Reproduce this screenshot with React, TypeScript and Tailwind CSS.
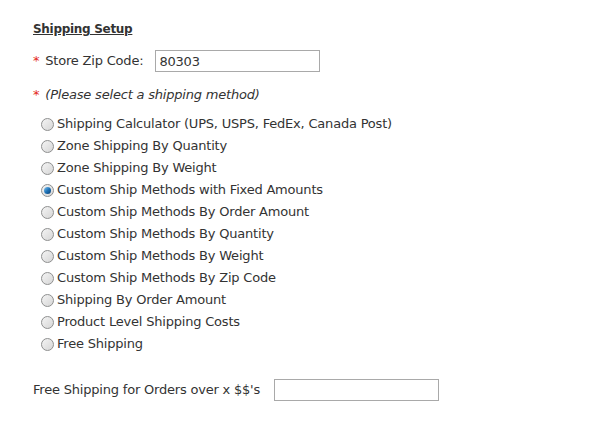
import { useState } from 'react'

const methods = [
  'Shipping Calculator (UPS, USPS, FedEx, Canada Post)',
  'Zone Shipping By Quantity',
  'Zone Shipping By Weight',
  'Custom Ship Methods with Fixed Amounts',
  'Custom Ship Methods By Order Amount',
  'Custom Ship Methods By Quantity',
  'Custom Ship Methods By Weight',
  'Custom Ship Methods By Zip Code',
  'Shipping By Order Amount',
  'Product Level Shipping Costs',
  'Free Shipping',
]

function Radio({ checked }: { checked: boolean }) {
  return (
    <span className="w-[13px] h-[13px] rounded-full border border-[#8e8f8f] bg-gradient-to-br from-[#f4f4f4] to-[#d6d6d6] flex items-center justify-center shrink-0">
      {checked && (
        <span className="w-[7px] h-[7px] rounded-full bg-gradient-to-br from-[#7cc4f0] via-[#1f74b8] to-[#0b3f75]" />
      )}
    </span>
  )
}

export default function App() {
  const [selected, setSelected] = useState(3)

  return (
    <div className="w-[593px] h-[430px] bg-white text-[#333] text-[13px] leading-[16px] tracking-[-0.2px] font-['DejaVu_Sans','Verdana',sans-serif] pl-[33px] pt-[21px]">
      <h2 className="font-bold underline text-[12px] tracking-[-0.3px]">Shipping Setup</h2>

      {/* Zip */}
      <div className="flex items-center mt-[13px] h-[22px]">
        <span className="text-[#e4291a] mr-[6px]">*</span>
        <span>Store Zip Code:</span>
        <input
          defaultValue="80303"
          className="ml-[12px] w-[165px] h-[22px] border border-[#a9a9a9] px-[3px] text-[13px] tracking-[-0.2px] outline-none"
        />
      </div>

      <div className="mt-[15px] italic">
        <span className="text-[#e4291a] not-italic mr-[6px]">*</span>
        (Please select a shipping method)
      </div>

      {/* Methods */}
      <div className="mt-[10px] pl-[8px] flex flex-col">
        {methods.map((m, i) => (
          <label key={m} className="flex items-center h-[22px] gap-[3px] cursor-default" onClick={() => setSelected(i)}>
            <Radio checked={selected === i} />
            <span>{m}</span>
          </label>
        ))}
      </div>

      <div className="flex items-center mt-[24px] h-[22px]">
        <span>Free Shipping for Orders over x $$'s</span>
        <input className="ml-[14px] w-[165px] h-[22px] border border-[#a9a9a9] px-[4px] outline-none" />
      </div>
    </div>
  )
}
